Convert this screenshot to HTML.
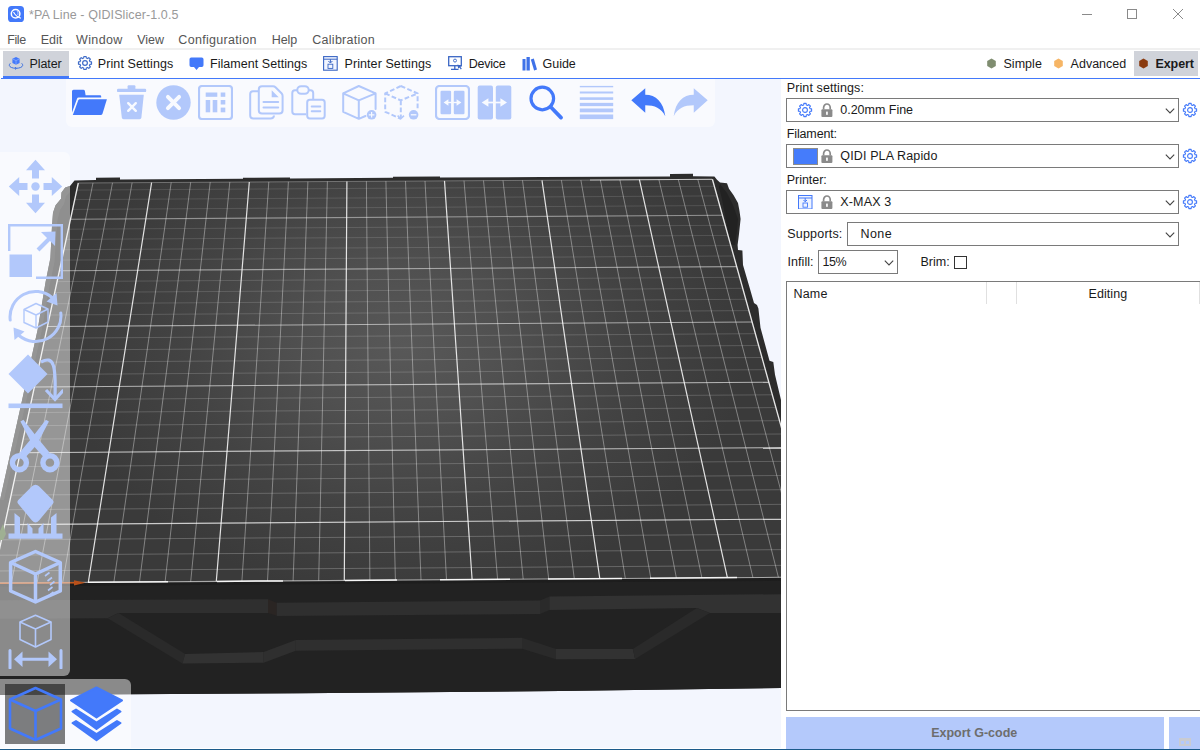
<!DOCTYPE html>
<html><head><meta charset="utf-8"><title>QIDISlicer</title>
<style>
html,body{margin:0;padding:0}
body{width:1200px;height:750px;position:relative;overflow:hidden;background:#fff;font-family:"Liberation Sans",sans-serif;font-size:12px;color:#1a1a1a}
.t,.lbl{position:absolute;white-space:nowrap;line-height:14px}
.lbl{font-size:12.5px;color:#1a1a1a}
.menu{font-size:13px;color:#555}
.tab{font-size:12.5px;color:#1a1a1a}
.combo{position:absolute;border:1px solid #7a7a7a;box-sizing:border-box;background:#fff}
#canvas{position:absolute;left:0;top:79px;width:781px;height:669px;background:#f3f6fe;overflow:hidden}
.ov{position:absolute;background:rgba(255,255,255,.47)}
</style></head><body>
<svg style="position:absolute;left:8px;top:6px" width="16" height="16" viewBox="0 0 16 16"><rect width="16" height="16" rx="3.6" fill="#4379fa"/><circle cx="7.6" cy="7.8" r="4.3" fill="none" stroke="#fff" stroke-width="1.5"/><path d="M5.5,6C7,9 9,11 13,12.2" fill="none" stroke="#fff" stroke-width="1.1"/><path d="M9,5C10,6 10.3,7.5 9.8,9" fill="none" stroke="#dfe8ff" stroke-width=".8"/></svg>
<div class="t" style="left:29.00px;top:8.00px;font-size:12.5px;font-weight:normal;color:#999;letter-spacing:0.090px">*PA Line - QIDISlicer-1.0.5</div>
<svg style="position:absolute;left:1075px;top:4px" width="115" height="20" viewBox="0 0 115 20"><g fill="none" stroke="#8a8a8a" stroke-width="1"><path d="M7,10.5L17,10.5"/><rect x="52.5" y="5.5" width="9" height="9"/><path d="M98,5L108,15M108,5L98,15"/></g></svg>
<div class="t" style="left:7.30px;top:33.00px;font-size:12.5px;font-weight:normal;color:#555;letter-spacing:-0.439px">File</div>
<div class="t" style="left:40.70px;top:33.00px;font-size:12.5px;font-weight:normal;color:#555;letter-spacing:0.013px">Edit</div>
<div class="t" style="left:76.00px;top:33.00px;font-size:12.5px;font-weight:normal;color:#555;letter-spacing:0.372px">Window</div>
<div class="t" style="left:137.30px;top:33.00px;font-size:12.5px;font-weight:normal;color:#555;letter-spacing:-0.044px">View</div>
<div class="t" style="left:178.30px;top:33.00px;font-size:12.5px;font-weight:normal;color:#555;letter-spacing:0.311px">Configuration</div>
<div class="t" style="left:271.70px;top:33.00px;font-size:12.5px;font-weight:normal;color:#555;letter-spacing:-0.030px">Help</div>
<div class="t" style="left:312.30px;top:33.00px;font-size:12.5px;font-weight:normal;color:#555;letter-spacing:0.267px">Calibration</div>
<div style="position:absolute;left:0;top:48px;width:1200px;height:2px;background:#f0f0f0"></div>
<div style="position:absolute;left:3px;top:51px;width:66px;height:25px;background:#d0d3da"></div>
<div style="position:absolute;left:3px;top:76px;width:66px;height:3px;background:#4379fa"></div>
<div style="position:absolute;left:1px;top:78px;width:1199px;height:1px;background:#4379fa"></div>
<div class="t" style="left:29.50px;top:57.00px;font-size:12.5px;font-weight:normal;color:#1a1a1a;letter-spacing:-0.076px">Plater</div>
<div class="t" style="left:97.80px;top:57.00px;font-size:12.5px;font-weight:normal;color:#1a1a1a;letter-spacing:0.090px">Print Settings</div>
<div class="t" style="left:210.00px;top:57.00px;font-size:12.5px;font-weight:normal;color:#1a1a1a;letter-spacing:0.042px">Filament Settings</div>
<div class="t" style="left:344.50px;top:57.00px;font-size:12.5px;font-weight:normal;color:#1a1a1a;letter-spacing:0.083px">Printer Settings</div>
<div class="t" style="left:468.80px;top:57.00px;font-size:12.5px;font-weight:normal;color:#1a1a1a;letter-spacing:-0.253px">Device</div>
<div class="t" style="left:542.50px;top:57.00px;font-size:12.5px;font-weight:normal;color:#1a1a1a;letter-spacing:-0.012px">Guide</div>
<svg style="position:absolute;left:8px;top:56px" width="16" height="15" viewBox="0 0 16 15"><path d="M8,1L11.6,2.8L11.6,7L8,8.8L4.4,7L4.4,2.8Z" fill="#4379fa"/><path d="M4.4,2.8L8,4.6L11.6,2.8M8,4.6L8,8.8" stroke="#9fbcff" stroke-width=".6" fill="none"/><path d="M2.3,7.3C-0.5,10 3,12.3 8,12.3C13,12.3 16.5,10 13.7,7.3" fill="none" stroke="#3a6fe0" stroke-width="1"/><path d="M7,11L8.3,12.4L7,13.6" fill="none" stroke="#3a6fe0" stroke-width=".9"/></svg>
<svg style="position:absolute;left:76.8px;top:54.7px" width="16" height="16" viewBox="0 0 16 16"><path d="M14.50,6.87L14.50,9.13L12.99,9.28L12.43,10.62L13.40,11.80L11.80,13.40L10.62,12.43L9.28,12.99L9.13,14.50L6.87,14.50L6.72,12.99L5.38,12.43L4.20,13.40L2.60,11.80L3.57,10.62L3.01,9.28L1.50,9.13L1.50,6.87L3.01,6.72L3.57,5.38L2.60,4.20L4.20,2.60L5.38,3.57L6.72,3.01L6.87,1.50L9.13,1.50L9.28,3.01L10.62,3.57L11.80,2.60L13.40,4.20L12.43,5.38L12.99,6.72Z" fill="none" stroke="#3f6cc8" stroke-width="1.2" stroke-linejoin="round"/><circle cx="8" cy="8" r="2.376" fill="none" stroke="#3f6cc8" stroke-width="1.2"/></svg>
<svg style="position:absolute;left:189px;top:57px" width="15" height="14" viewBox="0 0 15 14"><path d="M2.2,0.5L12.8,0.5Q14.5,0.5 14.5,2.2L14.5,8.3Q14.5,10 12.8,10L10,10L7.5,13L5,10L2.2,10Q0.5,10 0.5,8.3L0.5,2.2Q0.5,0.5 2.2,0.5Z" fill="#4379fa"/></svg>
<svg style="position:absolute;left:323px;top:56px" width="15" height="15" viewBox="0 0 15 15"><rect x="0.6" y="0.6" width="13.6" height="13.6" fill="#f2f6ff" stroke="#3a66c4" stroke-width="1.1"/><path d="M0.6,3.2L14.2,3.2M7.4,3.2L7.4,6.5" fill="none" stroke="#3a66c4" stroke-width="1"/><path d="M5.4,5L7.4,7L9.4,5" fill="none" stroke="#3a66c4" stroke-width="1"/><rect x="5" y="8.2" width="4.8" height="4.2" fill="none" stroke="#3a66c4" stroke-width="0.9"/></svg>
<svg style="position:absolute;left:448px;top:56px" width="16" height="15" viewBox="0 0 16 15"><rect x="0.7" y="0.7" width="12.6" height="9" fill="none" stroke="#3a66c4" stroke-width="1.3"/><path d="M3,13.3L10.5,13.3M6.8,10L6.8,13" stroke="#3a66c4" stroke-width="1.3"/><circle cx="7" cy="4.6" r="1.5" fill="none" stroke="#3a66c4" stroke-width=".9"/><path d="M9.5,8.5L14,10L12.3,10.8L13.8,12.8L12.8,13.5L11.4,11.5L10.2,12.7Z" fill="#3a66c4"/></svg>
<svg style="position:absolute;left:521.5px;top:56px" width="16" height="15" viewBox="0 0 16 15"><g fill="#3f72e8"><rect x="0.5" y="3" width="3" height="11.5"/><rect x="4.5" y="1" width="3.3" height="13.5"/><path d="M8.8,3.6L11.8,2.6L15,13.4L12.1,14.5Z"/></g></svg>
<div style="position:absolute;left:1134px;top:51px;width:64px;height:25px;background:#d0d3da"></div>
<svg style="position:absolute;left:986px;top:58px" width="11" height="11" viewBox="0 0 11 11"><path d="M5.5,0.6L9.8,3L9.8,8L5.5,10.4L1.2,8L1.2,3Z" fill="#7f8d70"/></svg>
<svg style="position:absolute;left:1052.5px;top:58px" width="11" height="11" viewBox="0 0 11 11"><path d="M5.5,0.6L9.8,3L9.8,8L5.5,10.4L1.2,8L1.2,3Z" fill="#f6b565"/></svg>
<svg style="position:absolute;left:1137.5px;top:58px" width="11" height="11" viewBox="0 0 11 11"><path d="M5.5,0.6L9.8,3L9.8,8L5.5,10.4L1.2,8L1.2,3Z" fill="#8a3b10"/></svg>
<div class="t" style="left:1003.50px;top:57.00px;font-size:12.5px;font-weight:normal;color:#1a1a1a;letter-spacing:0.030px">Simple</div>
<div class="t" style="left:1070.60px;top:57.00px;font-size:12.5px;font-weight:normal;color:#1a1a1a;letter-spacing:-0.001px">Advanced</div>
<div class="t" style="left:1155.50px;top:57.00px;font-size:12.5px;font-weight:bold;color:#1a1a1a;letter-spacing:-0.084px">Expert</div>
<div id="canvas">
<svg style="position:absolute;left:0;top:0" width="781" height="669" viewBox="0 79 781 669">
<defs><radialGradient id="bg" gradientUnits="userSpaceOnUse" cx="0" cy="0" r="1" gradientTransform="translate(405,345) scale(340,255)"><stop offset="0" stop-color="#585858"/><stop offset=".3" stop-color="#505050"/><stop offset=".65" stop-color="#434343"/><stop offset="1" stop-color="#3a3a3a"/></radialGradient></defs>
<path d="M74.5,180.5 L96,180 L96,177.8 L120,177.6 L120,179.6 L243,178.8 L243,177.8 L290,177.4 L290,178.4 L393,177.8 L393,176.8 L440,176.5 L440,177.5 L542,177 L670,176.4 L670,173.9 L693,173.8 L693,176.2 L714.4,176.4 L717,179.7 L720,182.4 L727,183.3 L729,188.8 L733.6,195.3 L738,203 L739.5,211 L740.6,219 L739,234 L737.6,245 L738,250 L742.4,250.6 L743,265 L750,289 L754,303 L757,305 L758.4,308.5 L760.5,327.7 L769.5,360.8 L773.3,361.9 L775,374.7 L781,400 L781,688 L560,691 L300,693.2 L0,695 L0,500 L17.7,420 L37.6,330 L41.6,306 L45.6,282 L50.4,258 L52,226 L53,212.7 L55.6,205.2 L61,198.8 L61.5,192.4 L65.2,187.6 L70,186 Z" fill="#2c2c2c"/>
<path d="M720,184 L727,193 L733,205 L738,219 L737,231 L735,245 L731,245 L728,231 L725,215 L722,199 L719,187Z" fill="#222"/>
<path d="M0,500 L17.7,420 L37.6,330 L41.6,306 L45.6,282 L50.4,258 L52,226 L53,212.7 L55.6,205.2 L61,198.8 L61.5,192.4 L65.2,187.6 L70,186 L70,192 L66,196 L64,204 L60,210 L57.5,220 L56,240 L54.5,262 L49.5,286 L41.5,332 L21.5,422 L4,500Z" fill="#383838"/>
<path d="M-8,583 L823,577 L823,687.5 L560,691 L300,693.2 L-8,695 Z" fill="#222"/>
<path d="M-8,583 L823,577 L823,580.5 L-8,586.5Z" fill="#1d1d1d"/>
<path d="M0,600.3 L268,599.3 L268,613 L118.5,613 L107.7,618.3 L0,618.8Z" fill="#2f2f2f"/>
<path d="M268,599.3 L276.7,602.7 L276.7,615.7 L268,613Z" fill="#2a2523"/>
<path d="M276.7,602.7 L540,600.6 L540,614 L276.7,615.9Z" fill="#2f2f2f"/>
<path d="M540,600.6 L549.5,596.4 L549.5,610 L540,614Z" fill="#2a2a2a"/>
<path d="M549.5,596.4 L781,594.2 L781,613 L709.8,612.9 L696.8,607.9 L549.5,610Z" fill="#323232"/>
<path d="M118.5,613 L185.2,654.1 L182.4,663.4 L107.7,618.3Z" fill="#2a2a2a"/>
<path d="M185.2,654.1 L263.7,652 L263.7,662.8 L182.4,663.4Z" fill="#323232"/>
<path d="M263.7,652 L295.8,640 L295.8,650.8 L263.7,662.8Z" fill="#2f2f2f"/>
<path d="M295.8,640 L522,637.8 L522,648.7 L295.8,650.8Z" fill="#2f2f2f"/>
<path d="M522,637.8 L556,649.1 L556,659.3 L522,648.7Z" fill="#2a2a2a"/>
<path d="M556,649.1 L632.9,649.1 L635.1,659 L556,659.3Z" fill="#323232"/>
<path d="M632.9,649.1 L696.8,607.9 L709.8,612.9 L635.1,659Z" fill="#2a2a2a"/>
<path d="M78.3,183.0L712.4,179.3L823.0,577.0L-7.8,583.0Z" fill="url(#bg)"/>
<path d="M11.4,582.9L93.0,182.9M37.1,582.7L112.5,182.8M62.7,582.5L132.1,182.7M113.9,582.1L171.2,182.5M139.5,581.9L190.7,182.3M165.1,581.8L210.2,182.2M190.7,581.6L229.8,182.1M241.9,581.2L268.8,181.9M267.5,581.0L288.4,181.8M293.1,580.8L307.9,181.7M318.7,580.6L327.4,181.5M369.9,580.3L366.4,181.3M395.4,580.1L385.9,181.2M421.0,579.9L405.5,181.1M446.5,579.7L425.0,181.0M497.6,579.3L464.0,180.7M523.2,579.2L483.5,180.6M548.7,579.0L503.0,180.5M574.3,578.8L522.5,180.4M625.3,578.4L561.4,180.2M650.8,578.2L580.9,180.1M676.4,578.1L600.4,180.0M701.9,577.9L619.9,179.8M752.9,577.5L658.9,179.6M778.4,577.3L678.3,179.5M803.9,577.1L697.8,179.4" stroke="#fff" stroke-opacity=".37" stroke-width="1" fill="none"/>
<g stroke="#fff" fill="none"><path d="M-5.2,571.0L819.7,565.1" stroke-opacity="0.227" stroke-width="1"/><path d="M-1.8,555.2L815.3,549.4" stroke-opacity="0.222" stroke-width="1"/><path d="M1.5,539.8L811.1,534.0" stroke-opacity="0.218" stroke-width="1"/><path d="M4.8,524.6L806.9,519.0" stroke-opacity="0.742" stroke-width="1.1"/><path d="M8.0,509.7L802.7,504.2" stroke-opacity="0.209" stroke-width="1"/><path d="M11.1,495.1L798.7,489.6" stroke-opacity="0.205" stroke-width="1"/><path d="M14.2,480.7L794.7,475.4" stroke-opacity="0.201" stroke-width="1"/><path d="M17.3,466.6L790.8,461.3" stroke-opacity="0.197" stroke-width="1"/><path d="M20.2,452.7L787.0,447.6" stroke-opacity="0.670" stroke-width="1.1"/><path d="M23.2,439.1L783.2,434.0" stroke-opacity="0.189" stroke-width="1"/><path d="M26.0,425.7L779.5,420.7" stroke-opacity="0.185" stroke-width="1"/><path d="M28.9,412.6L775.9,407.6" stroke-opacity="0.181" stroke-width="1"/><path d="M31.7,399.7L772.3,394.8" stroke-opacity="0.177" stroke-width="1"/><path d="M34.4,387.0L768.8,382.2" stroke-opacity="0.605" stroke-width="1.1"/><path d="M37.1,374.5L765.4,369.7" stroke-opacity="0.170" stroke-width="1"/><path d="M39.7,362.2L762.0,357.5" stroke-opacity="0.167" stroke-width="1"/><path d="M42.3,350.1L758.6,345.5" stroke-opacity="0.163" stroke-width="1"/><path d="M44.9,338.2L755.3,333.7" stroke-opacity="0.160" stroke-width="1"/><path d="M47.4,326.5L752.1,322.0" stroke-opacity="0.544" stroke-width="1.1"/><path d="M49.9,315.0L748.9,310.6" stroke-opacity="0.153" stroke-width="1"/><path d="M52.3,303.7L745.8,299.3" stroke-opacity="0.150" stroke-width="1"/><path d="M54.7,292.5L742.7,288.3" stroke-opacity="0.147" stroke-width="1"/><path d="M57.1,281.6L739.7,277.3" stroke-opacity="0.144" stroke-width="1"/><path d="M59.4,270.8L736.7,266.6" stroke-opacity="0.489" stroke-width="1.1"/><path d="M61.7,260.1L733.7,256.0" stroke-opacity="0.137" stroke-width="1"/><path d="M64.0,249.7L730.8,245.6" stroke-opacity="0.134" stroke-width="1"/><path d="M66.2,239.4L728.0,235.4" stroke-opacity="0.131" stroke-width="1"/><path d="M68.4,229.2L725.2,225.3" stroke-opacity="0.129" stroke-width="1"/><path d="M70.5,219.2L722.4,215.3" stroke-opacity="0.437" stroke-width="1.1"/><path d="M72.6,209.4L719.7,205.5" stroke-opacity="0.123" stroke-width="1"/><path d="M74.7,199.6L717.0,195.9" stroke-opacity="0.120" stroke-width="1"/><path d="M76.8,190.1L714.4,186.3" stroke-opacity="0.117" stroke-width="1"/></g>
<path d="M88.3,582.3L151.6,182.6M216.3,581.4L249.3,182.0M344.3,580.5L346.9,181.4M472.1,579.5L444.5,180.9M599.8,578.6L542.0,180.3M727.4,577.7L639.4,179.7" stroke="#fff" stroke-opacity=".85" stroke-width="1.2" fill="none"/>
<path d="M78.3,183.0L712.4,179.3" stroke="#fff" stroke-opacity=".3" stroke-width="1" fill="none"/>
<path d="M78.3,183.0L-7.8,583.0M712.4,179.3L823.0,577.0" stroke="#fff" stroke-opacity=".88" stroke-width="1.35" fill="none"/>
<path d="M-7.8,583.0L823.0,577.0" stroke="#fff" stroke-opacity=".6" stroke-width="1.1" fill="none"/>
<path d="M88,582.3L168,581.7M217,581.4L283,580.9M345,580.5L397,580.1M440,579.8L510,579.3M548,579.0L622,578.5M650,578.2L737,577.6" stroke="#fff" stroke-opacity=".9" stroke-width="1.5" fill="none"/>
<path d="M590,180.0L712,179.3" stroke="#fff" stroke-opacity=".6" stroke-width="1" fill="none"/>
<path d="M0,583.3 L80,582.8" stroke="#c0561c" stroke-width="1.6"/><path d="M74,580.3 L85.5,582.8 L74,585.5Z" fill="#b8501a"/>
<path d="M0,540 L0,531 L3,524 L6,534 L3,540Z" fill="#4b6b33"/>
</svg>
</div>
<div class="ov" style="left:66px;top:79px;width:649px;height:48px;border-radius:0 0 6px 6px"></div>
<div class="ov" style="left:0;top:152px;width:70px;height:524px;border-radius:0 6px 6px 0"></div>
<div class="ov" style="left:0;top:679px;width:131px;height:69px;border-radius:0 6px 0 0"></div>
<div style="position:absolute;left:5px;top:684px;width:60px;height:60px;background:rgba(0,0,0,.5)"></div>
<svg style="position:absolute;left:72px;top:85.3px" width="35" height="35" viewBox="0 0 35 35"><path fill="#4379fa" d="M0,6.3Q0,4.8 1.5,4.8L11.3,4.8Q12.6,4.8 12.9,6L13.6,10.2L28,10.2Q29.2,10.2 29.2,11.4L29.2,12.6L6.6,12.6Q5.4,12.6 5,13.8L0,27.5Z"/><path fill="#4379fa" d="M7.6,14.2L34.9,14.2L30.4,28.9Q30,30 28.6,30L0.8,30L6.3,15.2Q6.7,14.2 7.6,14.2Z"/></svg>
<svg style="position:absolute;left:114px;top:85.3px" width="35" height="35" viewBox="0 0 35 35"><g fill="#b2c8fb"><rect x="13.6" y="0.3" width="7.8" height="4.5" rx="1"/><rect x="3" y="3.7" width="29.2" height="3.4" rx="1.2"/><path d="M5.2,9.8L29.8,9.8L27.4,32.6Q27.2,34.2 25.6,34.2L9.6,34.2Q8,34.2 7.8,32.6Z"/></g><path d="M14.2,18.2L21.8,25.8M21.8,18.2L14.2,25.8" stroke="#f8faff" stroke-width="2.4" stroke-linecap="round"/></svg>
<svg style="position:absolute;left:156px;top:85.3px" width="35" height="35" viewBox="0 0 35 35"><circle cx="17.5" cy="17.5" r="17.2" fill="#b2c8fb"/><path d="M11.9,11.9L23.1,23.1M23.1,11.9L11.9,23.1" stroke="#f8faff" stroke-width="3.9" stroke-linecap="round"/></svg>
<svg style="position:absolute;left:198px;top:85.3px" width="35" height="35" viewBox="0 0 35 35"><rect x="1" y="1" width="33" height="33" rx="3" fill="none" stroke="#b2c8fb" stroke-width="2.2"/><g fill="#b2c8fb"><rect x="7.7" y="7.5" width="11.6" height="4.3"/><rect x="22.7" y="7.5" width="4.6" height="4.3"/><rect x="7.7" y="15" width="4.5" height="12.3"/><rect x="14.7" y="15" width="4.6" height="12.3"/><rect x="22.7" y="15" width="4.6" height="4.5"/><rect x="22.7" y="22.6" width="4.6" height="4.7"/></g></svg>
<svg style="position:absolute;left:249px;top:85.3px" width="35" height="35" viewBox="0 0 35 35"><g fill="none" stroke="#b2c8fb" stroke-width="2" stroke-linejoin="round"><path d="M9.5,6.2L4,6.2Q1.2,6.2 1.2,9L1.2,30.5Q1.2,33.6 4.3,33.6L21.5,33.6Q24.8,33.6 25,30.5"/><path d="M13,1.3L24,1.3Q25.5,1.3 26.5,2.3L32.5,8.3Q33.6,9.4 33.6,11L33.6,25.3Q33.6,28.6 30.3,28.6L13,28.6Q9.8,28.6 9.8,25.3L9.8,4.5Q9.8,1.3 13,1.3Z"/><path d="M14.5,17L29.2,17M14.5,22.5L29.2,22.5" stroke-linecap="round"/></g><path d="M22.7,5.2L22.7,12.2L29.7,12.2Z" fill="#b2c8fb"/></svg>
<svg style="position:absolute;left:291px;top:85.3px" width="35" height="35" viewBox="0 0 35 35"><g fill="none" stroke="#b2c8fb" stroke-width="2" stroke-linejoin="round"><path d="M6,5.2L4,5.2Q1.3,5.2 1.3,8L1.3,26.5Q1.3,29.3 4,29.3L15,29.3M18,5.2L19.5,5.2Q22.2,5.2 22.2,8L22.2,14"/><rect x="6.3" y="1.2" width="11.4" height="7.6" rx="3.8"/><rect x="16.2" y="14.8" width="17.5" height="18.6" rx="2.6"/><path d="M20.7,21.5L29.3,21.5M20.7,26.3L29.3,26.3" stroke-linecap="round"/></g></svg>
<svg style="position:absolute;left:342px;top:85.3px" width="35" height="35" viewBox="0 0 35 35"><g fill="none" stroke="#b2c8fb" stroke-width="2" stroke-linejoin="round" stroke-linecap="round"><path d="M16.8,1L33.6,8.4L33.6,24M16.8,33.8L1.2,26.8L1.2,8.4L16.8,1M1.2,8.4L16.8,15.4L33.6,8.4M16.8,15.4L16.8,33.8L23.5,31"/></g><circle cx="29.6" cy="29.8" r="4.8" fill="#b2c8fb"/><path d="M26.8,29.8L32.4,29.8M29.6,27L29.6,32.6" stroke="#f8faff" stroke-width="1.2"/></svg>
<svg style="position:absolute;left:384px;top:85.3px" width="35" height="35" viewBox="0 0 35 35"><g fill="none" stroke="#b2c8fb" stroke-width="2" stroke-linejoin="round" stroke-dasharray="4.8 2.3"><path d="M16.8,1L33.6,8.4L33.6,24M16.8,1L1.2,8.4L1.2,26.8L16.8,33.8M1.2,8.4L16.8,15.4L33.6,8.4M16.8,15.4L16.8,33"/></g><path d="M13.6,30.6L16.8,33.8L20,30.6" fill="none" stroke="#b2c8fb" stroke-width="1.5"/><circle cx="29.6" cy="29.8" r="4.8" fill="#b2c8fb"/><path d="M26.8,29.8L32.4,29.8" stroke="#f8faff" stroke-width="1.3"/></svg>
<svg style="position:absolute;left:435px;top:85.3px" width="35" height="35" viewBox="0 0 35 35"><rect x="1" y="1" width="33" height="33" rx="3.5" fill="none" stroke="#b2c8fb" stroke-width="2.2"/><g fill="#b2c8fb"><rect x="5.5" y="5.7" width="10.6" height="23.6" rx="1.2"/><rect x="18.8" y="5.7" width="10.7" height="23.6" rx="1.2"/></g><path d="M8.6,17.5L13.4,14.2L13.4,20.8ZM26.4,17.5L21.6,14.2L21.6,20.8Z" fill="#f8faff"/><path d="M12,17.5L23,17.5" stroke="#f8faff" stroke-width="1.4"/></svg>
<svg style="position:absolute;left:477px;top:85.3px" width="35" height="35" viewBox="0 0 35 35"><g fill="#b2c8fb"><rect x="0.7" y="0.4" width="15.3" height="34.2" rx="2"/><rect x="18.8" y="0.4" width="15.5" height="34.2" rx="2"/></g><path d="M4.7,17.5L11.4,13.2L11.4,21.8ZM30,17.5L23.4,13.2L23.4,21.8Z" fill="#f8faff"/><path d="M10,17.5L25,17.5" stroke="#f8faff" stroke-width="1.7"/></svg>
<svg style="position:absolute;left:528px;top:85.3px" width="35" height="35" viewBox="0 0 35 35"><circle cx="14.3" cy="13.5" r="11.3" fill="none" stroke="#4379fa" stroke-width="3.2"/><path d="M22.5,21.7L33,32.6" stroke="#4379fa" stroke-width="3.7" stroke-linecap="round"/></svg>
<svg style="position:absolute;left:579px;top:85.3px" width="35" height="35" viewBox="0 0 35 35"><g fill="#b2c8fb"><rect x="0.8" y="0.9" width="33.4" height="1.4"/><rect x="0.8" y="6.5" width="33.4" height="2"/><rect x="0.8" y="12.3" width="33.4" height="2.6"/><rect x="0.8" y="17.85" width="33.4" height="3.3"/><rect x="0.8" y="23.5" width="33.4" height="3.8"/><rect x="0.8" y="29.5" width="33.4" height="4.6"/></g></svg>
<svg style="position:absolute;left:630px;top:85.3px" width="37" height="35" viewBox="0 0 37 35"><path d="M1.3,15.3L15.25,3.3L15.25,9.75C26,9.75 33.5,17 35.3,31.2C31,23 25,20.25 15.25,20.25L15.25,27.75Z" fill="#4379fa"/></svg>
<svg style="position:absolute;left:672px;top:85.3px" width="37" height="35" viewBox="0 0 37 35"><g transform="translate(37,0) scale(-1,1)"><path d="M1.3,15.3L15.25,3.3L15.25,9.75C26,9.75 33.5,17 35.3,31.2C31,23 25,20.25 15.25,20.25L15.25,27.75Z" fill="#b2c8fb"/></g></svg>
<svg style="position:absolute;left:7.5px;top:158.5px" width="55" height="55" viewBox="0 0 55 55"><g fill="#b2c8fb"><path d="M27.5,0.8L37,11.2L31,11.2L31,19.5L24,19.5L24,11.2L18,11.2Z"/><path d="M27.5,54.2L37,43.8L31,43.8L31,35.5L24,35.5L24,43.8L18,43.8Z"/><path d="M0.8,27.5L11.2,18L11.2,24L19.5,24L19.5,31L11.2,31L11.2,37Z"/><path d="M54.2,27.5L43.8,18L43.8,24L35.5,24L35.5,31L43.8,31L43.8,37Z"/><circle cx="27.5" cy="27.5" r="4.2"/></g></svg>
<svg style="position:absolute;left:7.5px;top:224px" width="55" height="55" viewBox="0 0 55 55"><path d="M1.2,27L1.2,1.2L53.8,1.2L53.8,53.8L28,53.8" fill="none" stroke="#b2c8fb" stroke-width="2.4"/><rect x="1.5" y="30.5" width="22.5" height="22.5" fill="#b2c8fb"/><path d="M30,26L44,12" fill="none" stroke="#b2c8fb" stroke-width="4"/><path d="M33,8L47.5,7.5L47,22Z" fill="#b2c8fb"/></svg>
<svg style="position:absolute;left:7.5px;top:288.5px" width="55" height="55" viewBox="0 0 55 55"><g fill="none" stroke="#b2c8fb" stroke-width="3" stroke-linecap="round"><path d="M2.2,31A25.5,25.5 0 0 1 44,8.5"/><path d="M52.8,24A25.5,25.5 0 0 1 11,46.5"/></g><path d="M38.5,12.5L48.5,4L49.5,16.5Z" fill="#b2c8fb"/><path d="M16.5,42.5L6.5,51L5.5,38.5Z" fill="#b2c8fb"/><g fill="none" stroke="#b2c8fb" stroke-width="1.4" stroke-linejoin="round"><path d="M28,14.5L40,20L40,33L28,39L16,33.5L16,20.5Z"/><path d="M16,20.5L28,26L40,20M28,26L28,39"/></g></svg>
<svg style="position:absolute;left:7.5px;top:353.5px" width="55" height="55" viewBox="0 0 55 55"><path d="M20,0.5L39.5,20L20,39.5L0.5,20Z" fill="#b2c8fb"/><path d="M33,8C46,1 48,12 47,43" fill="none" stroke="#b2c8fb" stroke-width="3.2"/><path d="M38,36L47,45.5L55.5,36" fill="none" stroke="#b2c8fb" stroke-width="3.2"/><rect x="0.5" y="49.5" width="54" height="4.6" fill="#b2c8fb"/></svg>
<svg style="position:absolute;left:7.5px;top:418.5px" width="55" height="55" viewBox="0 0 55 55"><g fill="none" stroke="#b2c8fb" stroke-width="5.4"><circle cx="11.4" cy="43.7" r="7"/><circle cx="41.9" cy="43.7" r="7"/></g><path d="M12.4,2.4L15.4,0.7L30.8,20.5L41.5,33.5L36,38.5L24.3,25.5Z" fill="#b2c8fb"/><g transform="translate(53.3,0) scale(-1,1)"><path d="M12.4,2.4L15.4,0.7L30.8,20.5L41.5,33.5L36,38.5L24.3,25.5Z" fill="#b2c8fb"/></g></svg>
<svg style="position:absolute;left:7.5px;top:483.5px" width="55" height="55" viewBox="0 0 55 55"><path d="M27.5,0.8Q29.5,0.8 31,2.3L44.7,16Q46.5,18 44.7,20L31,36.5Q27.5,40.5 24,36.5L10.3,20Q8.5,18 10.3,16L24,2.3Q25.5,0.8 27.5,0.8Z" fill="#b2c8fb"/><path d="M0.5,49.5L6.5,49.5L6.5,29L12,33.5L12,49.5L19.5,49.5L19.5,39L24.5,44.5L24.5,49.5L30.5,49.5L30.5,44.5L35.5,39L35.5,49.5L43,49.5L43,33.5L48.5,29L48.5,49.5L54.5,49.5L54.5,54.7L0.5,54.7Z" fill="#b2c8fb"/></svg>
<svg style="position:absolute;left:7.5px;top:548.5px" width="55" height="55" viewBox="0 0 55 55"><g fill="none" stroke="#b2c8fb" stroke-width="3.5" stroke-linejoin="round"><path d="M27.5,2.5L52.3,13.5L52.3,42L27.5,53L2.6,42L2.6,13.5Z"/><path d="M2.6,13.5L27.5,25L52.3,13.5M27.5,25L27.5,53"/></g><g fill="none" stroke="#b2c8fb" stroke-width="1.6"><path d="M37,27L41.5,23.5M39.5,32L44,28.5M42,36L46.5,32.5M40,41.5L44.5,38M41,46.5L45.5,43"/></g></svg>
<svg style="position:absolute;left:7.5px;top:613.5px" width="55" height="55" viewBox="0 0 55 55"><g fill="none" stroke="#b2c8fb" stroke-width="1.6" stroke-linejoin="round"><path d="M27.5,1.2L43,8L43,25.5L27.5,33L12,25.5L12,8Z"/><path d="M12,8L27.5,15L43,8M27.5,15L27.5,33"/></g><g fill="none" stroke="#b2c8fb" stroke-width="3" stroke-linecap="round"><path d="M2,36.5L2,54M53,36.5L53,54"/></g><path d="M6,45.2L14.5,37.5L14.5,43.7L40.5,43.7L40.5,37.5L49,45.2L40.5,53L40.5,46.8L14.5,46.8L14.5,53Z" fill="#b2c8fb"/></svg>
<svg style="position:absolute;left:7.5px;top:686px" width="55" height="56" viewBox="0 0 55 56"><g fill="none" stroke="#4379fa" stroke-width="2.6" stroke-linejoin="round"><path d="M27.5,2L53,13.5L53,42.5L27.5,54L2,42.5L2,13.5Z"/><path d="M2,13.5L27.5,25L53,13.5M27.5,25L27.5,54"/></g></svg>
<svg style="position:absolute;left:68.5px;top:686px" width="55" height="56" viewBox="0 0 55 56"><g fill="#4379fa" stroke="#4379fa" stroke-width="2" stroke-linejoin="round"><path d="M27.5,1.5L53,14.5L27.5,31.5L2,14.5Z"/><path d="M3.5,25.5L7,23.5L27.5,36.5L48,23.5L51.5,25.5L27.5,43Z"/><path d="M3.5,37L7,35L27.5,48L48,35L51.5,37L27.5,54.3Z"/></g></svg>
<div class="t" style="left:786.80px;top:81.00px;font-size:12.5px;font-weight:normal;color:#1a1a1a;letter-spacing:0.098px">Print settings:</div>
<div class="t" style="left:786.80px;top:127.00px;font-size:12.5px;font-weight:normal;color:#1a1a1a;letter-spacing:-0.145px">Filament:</div>
<div class="t" style="left:786.80px;top:173.00px;font-size:12.5px;font-weight:normal;color:#1a1a1a;letter-spacing:-0.050px">Printer:</div>
<div class="combo" style="left:786px;top:98px;width:393px;height:24px"></div>
<div class="t" style="left:840.30px;top:103.00px;font-size:12.5px;font-weight:normal;color:#1a1a1a;letter-spacing:-0.023px">0.20mm Fine</div>
<svg style="position:absolute;left:821px;top:103px" width="12" height="14.5" viewBox="0 0 12 14.5"><path d="M2.6,6.5L2.6,4.6A3.3,3.6 0 0 1 9.2,4.6L9.2,6.5" fill="none" stroke="#8a8a8a" stroke-width="1.7"/><rect x="0.4" y="6.2" width="11" height="7.8" rx="1" fill="#8a8a8a"/><rect x="5.1" y="8.6" width="1.7" height="3.2" fill="#fff"/></svg>
<svg style="position:absolute;left:1165px;top:108px" width="10" height="6" viewBox="0 0 10 6"><path d="M0.8,0.7L5,4.9L9.2,0.7" fill="none" stroke="#444" stroke-width="1.1"/></svg>
<svg style="position:absolute;left:1182px;top:102px" width="16" height="16" viewBox="0 0 16 16"><path d="M14.60,6.85L14.60,9.15L13.06,9.30L12.50,10.66L13.48,11.85L11.85,13.48L10.66,12.50L9.30,13.06L9.15,14.60L6.85,14.60L6.70,13.06L5.34,12.50L4.15,13.48L2.52,11.85L3.50,10.66L2.94,9.30L1.40,9.15L1.40,6.85L2.94,6.70L3.50,5.34L2.52,4.15L4.15,2.52L5.34,3.50L6.70,2.94L6.85,1.40L9.15,1.40L9.30,2.94L10.66,3.50L11.85,2.52L13.48,4.15L12.50,5.34L13.06,6.70Z" fill="none" stroke="#4379fa" stroke-width="1.1" stroke-linejoin="round"/><circle cx="8" cy="8" r="2.412" fill="none" stroke="#4379fa" stroke-width="1.1"/></svg>
<div class="combo" style="left:786px;top:144px;width:393px;height:24px"></div>
<div class="t" style="left:840.30px;top:149.00px;font-size:12.5px;font-weight:normal;color:#1a1a1a;letter-spacing:0.133px">QIDI PLA Rapido</div>
<svg style="position:absolute;left:821px;top:149px" width="12" height="14.5" viewBox="0 0 12 14.5"><path d="M2.6,6.5L2.6,4.6A3.3,3.6 0 0 1 9.2,4.6L9.2,6.5" fill="none" stroke="#8a8a8a" stroke-width="1.7"/><rect x="0.4" y="6.2" width="11" height="7.8" rx="1" fill="#8a8a8a"/><rect x="5.1" y="8.6" width="1.7" height="3.2" fill="#fff"/></svg>
<svg style="position:absolute;left:1165px;top:154px" width="10" height="6" viewBox="0 0 10 6"><path d="M0.8,0.7L5,4.9L9.2,0.7" fill="none" stroke="#444" stroke-width="1.1"/></svg>
<svg style="position:absolute;left:1182px;top:148px" width="16" height="16" viewBox="0 0 16 16"><path d="M14.60,6.85L14.60,9.15L13.06,9.30L12.50,10.66L13.48,11.85L11.85,13.48L10.66,12.50L9.30,13.06L9.15,14.60L6.85,14.60L6.70,13.06L5.34,12.50L4.15,13.48L2.52,11.85L3.50,10.66L2.94,9.30L1.40,9.15L1.40,6.85L2.94,6.70L3.50,5.34L2.52,4.15L4.15,2.52L5.34,3.50L6.70,2.94L6.85,1.40L9.15,1.40L9.30,2.94L10.66,3.50L11.85,2.52L13.48,4.15L12.50,5.34L13.06,6.70Z" fill="none" stroke="#4379fa" stroke-width="1.1" stroke-linejoin="round"/><circle cx="8" cy="8" r="2.412" fill="none" stroke="#4379fa" stroke-width="1.1"/></svg>
<div class="combo" style="left:786px;top:190px;width:393px;height:24px"></div>
<div class="t" style="left:840.30px;top:195.00px;font-size:12.5px;font-weight:normal;color:#1a1a1a;letter-spacing:0.155px">X-MAX 3</div>
<svg style="position:absolute;left:821px;top:195px" width="12" height="14.5" viewBox="0 0 12 14.5"><path d="M2.6,6.5L2.6,4.6A3.3,3.6 0 0 1 9.2,4.6L9.2,6.5" fill="none" stroke="#8a8a8a" stroke-width="1.7"/><rect x="0.4" y="6.2" width="11" height="7.8" rx="1" fill="#8a8a8a"/><rect x="5.1" y="8.6" width="1.7" height="3.2" fill="#fff"/></svg>
<svg style="position:absolute;left:1165px;top:200px" width="10" height="6" viewBox="0 0 10 6"><path d="M0.8,0.7L5,4.9L9.2,0.7" fill="none" stroke="#444" stroke-width="1.1"/></svg>
<svg style="position:absolute;left:1182px;top:194px" width="16" height="16" viewBox="0 0 16 16"><path d="M14.60,6.85L14.60,9.15L13.06,9.30L12.50,10.66L13.48,11.85L11.85,13.48L10.66,12.50L9.30,13.06L9.15,14.60L6.85,14.60L6.70,13.06L5.34,12.50L4.15,13.48L2.52,11.85L3.50,10.66L2.94,9.30L1.40,9.15L1.40,6.85L2.94,6.70L3.50,5.34L2.52,4.15L4.15,2.52L5.34,3.50L6.70,2.94L6.85,1.40L9.15,1.40L9.30,2.94L10.66,3.50L11.85,2.52L13.48,4.15L12.50,5.34L13.06,6.70Z" fill="none" stroke="#4379fa" stroke-width="1.1" stroke-linejoin="round"/><circle cx="8" cy="8" r="2.412" fill="none" stroke="#4379fa" stroke-width="1.1"/></svg>
<svg style="position:absolute;left:797px;top:102px" width="16" height="16" viewBox="0 0 16 16"><path d="M14.60,6.85L14.60,9.15L13.06,9.30L12.50,10.66L13.48,11.85L11.85,13.48L10.66,12.50L9.30,13.06L9.15,14.60L6.85,14.60L6.70,13.06L5.34,12.50L4.15,13.48L2.52,11.85L3.50,10.66L2.94,9.30L1.40,9.15L1.40,6.85L2.94,6.70L3.50,5.34L2.52,4.15L4.15,2.52L5.34,3.50L6.70,2.94L6.85,1.40L9.15,1.40L9.30,2.94L10.66,3.50L11.85,2.52L13.48,4.15L12.50,5.34L13.06,6.70Z" fill="none" stroke="#4379fa" stroke-width="1.1" stroke-linejoin="round"/><circle cx="8" cy="8" r="2.412" fill="none" stroke="#4379fa" stroke-width="1.1"/></svg>
<div style="position:absolute;left:793px;top:148px;width:23px;height:15px;background:#457cfb;border:1px solid #8c8c8c;box-sizing:content-box"></div>
<svg style="position:absolute;left:798px;top:194.5px" width="14.5" height="14.5" viewBox="0 0 14.5 14.5"><rect x="0.5" y="0.5" width="13.5" height="13.5" fill="#eef3ff" stroke="#4379fa" stroke-width="1"/><path d="M0.5,3L14,3M7.2,3L7.2,6.5M5.5,5L7.2,6.8L9,5" fill="none" stroke="#4379fa" stroke-width="1"/><rect x="5" y="8" width="4.5" height="4.2" fill="none" stroke="#4379fa" stroke-width="0.9"/></svg>
<div class="t" style="left:787.30px;top:227.00px;font-size:12.5px;font-weight:normal;color:#1a1a1a;letter-spacing:0.187px">Supports:</div>
<div class="combo" style="left:847px;top:222px;width:332px;height:24px"></div>
<div class="t" style="left:860.60px;top:227.00px;font-size:12.5px;font-weight:normal;color:#1a1a1a;letter-spacing:0.377px">None</div>
<svg style="position:absolute;left:1165px;top:232px" width="10" height="6" viewBox="0 0 10 6"><path d="M0.8,0.7L5,4.9L9.2,0.7" fill="none" stroke="#444" stroke-width="1.1"/></svg>
<div class="t" style="left:787.50px;top:255.00px;font-size:12.5px;font-weight:normal;color:#1a1a1a;letter-spacing:0.057px">Infill:</div>
<div class="combo" style="left:818px;top:250px;width:80px;height:24px"></div>
<div class="t" style="left:822.40px;top:255.00px;font-size:12.5px;font-weight:normal;color:#1a1a1a;letter-spacing:-0.377px">15%</div>
<svg style="position:absolute;left:884px;top:260px" width="10" height="6" viewBox="0 0 10 6"><path d="M0.8,0.7L5,4.9L9.2,0.7" fill="none" stroke="#444" stroke-width="1.1"/></svg>
<div class="t" style="left:920.40px;top:255.00px;font-size:12.5px;font-weight:normal;color:#1a1a1a;letter-spacing:0.066px">Brim:</div>
<div style="position:absolute;left:954px;top:256px;width:13px;height:13px;border:1px solid #333;box-sizing:border-box;background:#fff"></div>
<div style="position:absolute;left:786px;top:281px;width:420px;height:430px;border:1px solid #7a7a7a;box-sizing:border-box;background:#fff"></div>
<div class="t" style="left:793.40px;top:287.00px;font-size:12.5px;font-weight:normal;color:#1a1a1a;letter-spacing:0.214px">Name</div>
<div class="t" style="left:1088.50px;top:287.00px;font-size:12.5px;font-weight:normal;color:#1a1a1a;letter-spacing:0.067px">Editing</div>
<div style="position:absolute;left:986px;top:282px;width:1px;height:22px;background:#e0e0e0"></div>
<div style="position:absolute;left:1016px;top:282px;width:1px;height:22px;background:#e0e0e0"></div>
<div style="position:absolute;left:1199px;top:282px;width:1px;height:22px;background:#e0e0e0"></div>
<div style="position:absolute;left:786px;top:717px;width:378px;height:32px;background:#b4c9fb"></div>
<div style="position:absolute;left:1169px;top:717px;width:31px;height:32px;background:#b4c9fb"></div><div style="position:absolute;left:1179px;top:738px;width:12px;height:8px;background:#c9cbd2"></div><div style="position:absolute;left:1181px;top:741px;width:3px;height:3px;background:#b4c9fb"></div><div style="position:absolute;left:1186px;top:741px;width:3px;height:3px;background:#b4c9fb"></div>
<div class="t" style="left:931.20px;top:726.00px;font-size:12.5px;font-weight:bold;color:#6d6d6d;letter-spacing:-0.002px">Export G-code</div>
<div style="position:absolute;left:0;top:749px;width:1200px;height:1px;background:#1b5a8a"></div>
</body></html>
